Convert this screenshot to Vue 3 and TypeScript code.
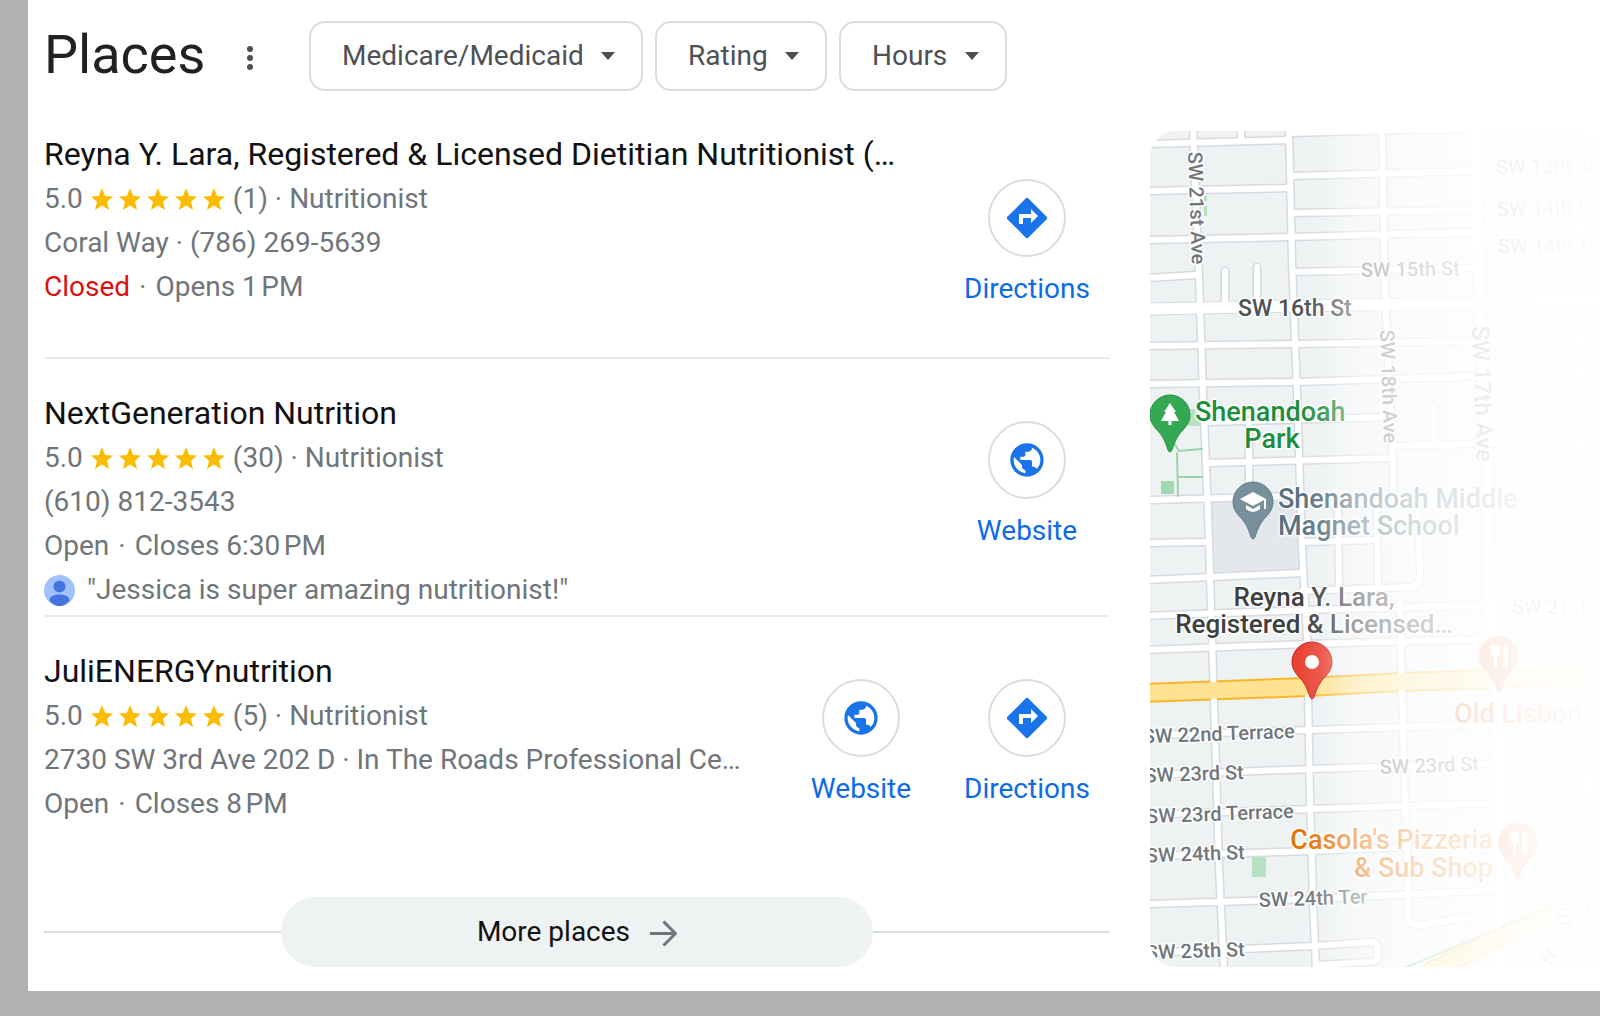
<script setup lang="ts">
type Action = 'website' | 'directions'

interface Place {
  name: string
  reviews: number
  address: string
  status: string
  closed?: boolean
  hours: string
  quote?: string
  actions: Action[]
  lowActions?: boolean
}

interface Label {
  text: string
  x: number
  y: number
  size: number
  fill: string
  rotate?: number
  anchor?: 'start' | 'middle' | 'end'
}

const filters: string[] = ['Medicare/Medicaid', 'Rating', 'Hours']

const places: Place[] = [
  {
    name: 'Reyna Y. Lara, Registered & Licensed Dietitian Nutritionist (…',
    reviews: 1,
    address: 'Coral Way · (786) 269-5639',
    status: 'Closed',
    closed: true,
    hours: 'Opens 1\u202fPM',
    actions: ['directions'],
    lowActions: true,
  },
  {
    name: 'NextGeneration Nutrition',
    reviews: 30,
    address: '(610) 812-3543',
    status: 'Open',
    hours: 'Closes 6:30\u202fPM',
    quote: '"Jessica is super amazing nutritionist!"',
    actions: ['website'],
  },
  {
    name: 'JuliENERGYnutrition',
    reviews: 5,
    address: '2730 SW 3rd Ave 202 D · In The Roads Professional Ce…',
    status: 'Open',
    hours: 'Closes 8\u202fPM',
    actions: ['website', 'directions'],
  },
]

const actionLabels: Record<Action, string> = { website: 'Website', directions: 'Directions' }

const avenues: string[] = [
  'M43-4L49 146L53 262L58 382L62 506L65 602L69 736L74 840',
  'M139-4L142 129L147 262L152 416L157 506L160 669L163 769L166 840',
  'M232-4L235 162L243 332V360M250 472L253 602L258 762V784Q260 796 270 794L320 786',
  'M91-4V10M99 292V366M188 378L189 456M227 378L228 456M284 275V313',
  'M75 140V176M107 136V176',
  'M426-4L430 300L440 840',
]

const wideAvenue = 'M326-4L328 129L338 349L340 466L348 602L352 840'

const streets: string[] = [
  'M-4 13L138 9M140 2L326-3',
  'M-4 60L140 57M141 45L326 40M141 82L326 79',
  'M-4 109L141 106L326 101L454 98',
  'M-4 147L47 144M143 141L328 137',
  'M-4 215L145 213L330 210L454 208',
  'M-4 253L146 251L332 245L454 243',
  'M56 291L243 286M58 332L243 327M243 315L454 310',
  'M-4 369L150 365M150 374L268 370M-4 412L57 411M153 411L226 409',
  'M-4 449L152 442M152 460L260 456Q271 455 270 440L268 372',
  'M-4 485L157 479L338 474M-4 519L157 513L340 508',
  'M-4 604L161 599L346 593M-4 644L161 638L348 632',
  'M-4 684L161 678L350 672M-4 725L163 720L258 716',
  'M-4 773L163 768L352 759M352 654L454 651',
  'M-4 822L165 815L220 811Q228 811 228 819V823Q228 831 220 831L168 834',
]

const mainStreet = 'M-4 178L144 175L328 172L454 170'
const coralWay = 'M-4 562L157 556L252 551L454 544'
const highway = 'M281 840L352 806L407 782L454 757'

const gray = '#70767b'
const green = '#1e8e3e'
const slate = '#587282'
const ink = '#3f3f3f'
const orange = '#e37400'

const labels: Label[] = [
  { text: 'SW 21st Ave', x: 38, y: 21, size: 20, fill: gray, rotate: 88 },
  { text: 'SW 13th St', x: 346, y: 43, size: 20, fill: gray, rotate: -1 },
  { text: 'SW 14th St', x: 347, y: 85, size: 20, fill: gray, rotate: -1 },
  { text: 'SW 14th Ter', x: 348, y: 122, size: 20, fill: gray, rotate: -1 },
  { text: 'SW 15th St', x: 211, y: 146, size: 20, fill: gray, rotate: -1 },
  { text: 'SW 16th St', x: 88, y: 185, size: 23, fill: '#4d5256' },
  { text: 'SW 18th Ave', x: 230, y: 199, size: 20, fill: gray, rotate: 88 },
  { text: 'SW 17th Ave', x: 322, y: 195, size: 24, fill: gray, rotate: 88 },
  { text: 'Shenandoah', x: 45, y: 290, size: 27, fill: green },
  { text: 'Park', x: 122, y: 317, size: 27, fill: green, anchor: 'middle' },
  { text: 'Shenandoah Middle', x: 128, y: 377, size: 27, fill: slate },
  { text: 'Magnet School', x: 128, y: 404, size: 27, fill: slate },
  { text: 'Reyna Y. Lara,', x: 164, y: 475, size: 26, fill: ink, anchor: 'middle' },
  { text: 'Registered & Licensed…', x: 164, y: 502, size: 26, fill: ink, anchor: 'middle' },
  { text: 'SW 21st St', x: 362, y: 483, size: 20, fill: gray },
  { text: 'Old Lisbon R', x: 304, y: 592, size: 27, fill: '#e0581c' },
  { text: 'SW 22nd Terrace', x: 145, y: 607, size: 20, fill: gray, rotate: -2, anchor: 'end' },
  { text: 'SW 23rd St', x: 94, y: 648, size: 20, fill: gray, rotate: -2, anchor: 'end' },
  { text: 'SW 23rd St', x: 230, y: 643, size: 20, fill: gray, rotate: -2 },
  { text: 'SW 23rd Terrace', x: 144, y: 687, size: 20, fill: gray, rotate: -2, anchor: 'end' },
  { text: 'SW 24th St', x: 95, y: 728, size: 20, fill: gray, rotate: -2, anchor: 'end' },
  { text: "Casola's Pizzeria", x: 343, y: 718, size: 27, fill: orange, anchor: 'end' },
  { text: '& Sub Shop', x: 343, y: 746, size: 27, fill: orange, anchor: 'end' },
  { text: 'SW 24th Ter', x: 109, y: 776, size: 20, fill: gray, rotate: -2 },
  { text: 'SW 25th St', x: 95, y: 825, size: 20, fill: gray, rotate: -2, anchor: 'end' },
  { text: 'S Dixie', x: 412, y: 796, size: 24, fill: gray, rotate: -27 },
  { text: 'H', x: 400, y: 836, size: 20, fill: gray, rotate: -50 },
]

const pinShape =
  'M0-20C11-20 20-11 20 0C20 7 16 12 11 17C6 23 4 29 2 35Q0 39-2 35C-4 29-6 23-11 17C-16 12-20 7-20 0C-20-11-11-20 0-20Z'
</script>

<template>
  <main class="page">
    <section class="listing">
      <header class="head">
        <h1>Places</h1>
        <button class="more" type="button" aria-label="More options">
          <svg width="8" height="26" viewBox="0 0 8 26" aria-hidden="true">
            <circle cx="4" cy="4" r="3" /><circle cx="4" cy="13" r="3" /><circle cx="4" cy="22" r="3" />
          </svg>
        </button>
        <div class="filters">
          <div v-for="filter in filters" :key="filter" class="chip">
            <select :aria-label="filter">
              <option>{{ filter }}</option>
            </select>
            <svg width="14" height="8" viewBox="0 0 14 8" aria-hidden="true"><path d="M0 0H14L7 8Z" /></svg>
          </div>
        </div>
      </header>

      <article v-for="place in places" :key="place.name" class="place">
        <div class="info">
          <h2>{{ place.name }}</h2>
          <p class="rating">
            <span>5.0</span>
            <svg width="134" height="22" viewBox="0 0 134 22" role="img" aria-label="5 stars">
              <path
                v-for="n in 5"
                :key="n"
                :transform="`translate(${(n - 1) * 28} 0)`"
                d="M11 0L14.2 7.9L22 8.4L16 13.8L18 22L11 17.6L4 22L6 13.8L0 8.4L7.800 7.900Z"
              />
            </svg>
            <span>({{ place.reviews }}) · Nutritionist</span>
          </p>
          <p>{{ place.address }}</p>
          <p class="hours">
            <span :class="{ closed: place.closed }">{{ place.status }}</span>
            <span>·</span>
            <span>{{ place.hours }}</span>
          </p>
          <p v-if="place.quote" class="quote">
            <svg width="31" height="31" viewBox="0 0 31 31" aria-hidden="true">
              <circle cx="15.500" cy="15.500" r="15.500" fill="#a1c2fa" />
              <circle cx="15.500" cy="11.500" r="6" fill="#4374e0" />
              <path d="M5.500 25.500C5.500 21 11 19.500 15.500 19.500S25.500 21 25.500 25.500C23 29 19.500 31 15.500 31S8 29 5.500 25.500Z" fill="#4374e0" />
            </svg>
            <span>{{ place.quote }}</span>
          </p>
        </div>
        <div class="actions" :class="{ low: place.lowActions }">
          <a v-for="action in place.actions" :key="action" href="#" class="action">
            <span class="ring">
              <svg v-if="action === 'website'" width="40" height="40" viewBox="0 0 24 24" aria-hidden="true">
                <path d="M12 2C6.480 2 2 6.480 2 12s4.480 10 10 10 10-4.480 10-10S17.520 2 12 2zM4 12c0-.61.08-1.210.21-1.780L8.990 15v1c0 1.100.9 2 2 2v1.930C7.060 19.430 4 16.070 4 12zm13.890 5.400c-.26-.81-1-1.400-1.900-1.400h-1v-3c0-.55-.45-1-1-1h-6v-2h2c.55 0 1-.45 1-1V7h2c1.100 0 2-.9 2-2v-.41C17.920 5.770 20 8.650 20 12c0 2.080-.81 3.980-2.110 5.400z" />
              </svg>
              <svg v-else width="48" height="48" viewBox="0 0 24 24" aria-hidden="true">
                <path d="M21.710 11.290l-9-9a1 1 0 0 0-1.420 0l-9 9a1 1 0 0 0 0 1.420l9 9a1 1 0 0 0 1.420 0l9-9a1 1 0 0 0 0-1.420zM14 14.500V12h-4v3H8v-5h6V7.500l3.500 3.500z" />
              </svg>
            </span>
            <span>{{ actionLabels[action] }}</span>
          </a>
        </div>
      </article>

      <div class="footer">
        <a href="#" class="all">
          <span>More places</span>
          <svg width="27" height="27" viewBox="0 0 27 27" aria-hidden="true">
            <path d="M0 14.500H25M13.500 2.500L25.500 14.500L13.500 26.500" />
          </svg>
        </a>
      </div>
    </section>

    <svg class="map" viewBox="0 0 450 836" preserveAspectRatio="xMinYMin slice" role="img" aria-label="Map of places">
      <defs>
        <linearGradient id="fade">
          <stop offset="0.33" stop-color="#fff" stop-opacity="0" />
          <stop offset="0.38" stop-color="#fff" stop-opacity="0.12" />
          <stop offset="0.43" stop-color="#fff" stop-opacity="0.4" />
          <stop offset="0.48" stop-color="#fff" stop-opacity="0.58" />
          <stop offset="0.58" stop-color="#fff" stop-opacity="0.74" />
          <stop offset="0.72" stop-color="#fff" stop-opacity="0.86" />
          <stop offset="0.82" stop-color="#fff" stop-opacity="0.93" />
          <stop offset="1" stop-color="#fff" stop-opacity="0.98" />
        </linearGradient>
      </defs>
      <rect width="450" height="836" fill="#eef2f3" />
      <path d="M61 371L151 367V441L62 446Z" fill="#e4e8ec" />
      <g fill="#b7e1c1">
        <rect x="54" y="65" width="3" height="5" />
        <rect x="54" y="75" width="3" height="10" />
        <path d="M38 278H44L52 290V295H38Z" />
        <rect x="11" y="350" width="13" height="13" fill="#a3d9b1" />
        <rect x="102" y="725" width="14" height="21" />
      </g>
      <g fill="none" stroke-linecap="round">
        <g stroke="#d6dae1">
          <path v-for="d in avenues" :key="d" :d="d" stroke-width="9" />
          <path v-for="d in streets" :key="d" :d="d" stroke-width="9" />
          <path :d="wideAvenue" stroke-width="13" />
          <path :d="mainStreet" stroke-width="13" />
        </g>
        <path :d="coralWay" stroke="#f9b529" stroke-width="20" />
        <g stroke="#fff">
          <path v-for="d in avenues" :key="d" :d="d" stroke-width="6" />
          <path v-for="d in streets" :key="d" :d="d" stroke-width="6" />
          <path :d="wideAvenue" stroke-width="11" />
          <path :d="mainStreet" stroke-width="11" />
        </g>
        <path :d="coralWay" stroke="#fde293" stroke-width="16" />
        <path d="M247 840L350 797L454 748" stroke="#81c995" stroke-width="2" />
        <path :d="highway" stroke="#f9b529" stroke-width="19" />
        <path :d="highway" stroke="#fde293" stroke-width="16" />
        <path d="M24 312L29 320L52 318M27 322L28 365M28 346H52" stroke="#9ad5aa" stroke-width="2" />
      </g>

      <g class="labels">
        <text
          v-for="(label, i) in labels"
          :key="i"
          :x="label.x"
          :y="label.y"
          :font-size="label.size"
          :fill="label.fill"
          :text-anchor="label.anchor ?? 'start'"
          :transform="`rotate(${label.rotate ?? 0} ${label.x} ${label.y})`"
        >{{ label.text }}</text>
      </g>

      <g transform="translate(20 284)">
        <path :d="pinShape" fill="#34a853" stroke="#249343" />
        <path d="M0-12L6-3H4L9 6H1.500V10H-1.500V6H-9L-4-3H-6Z" fill="#fff" />
      </g>
      <g transform="translate(103 371)">
        <path :d="pinShape" fill="#78909c" stroke="#607d8b" />
        <path d="M0-10L13-3V7H11V-2L0 4L-13-3ZM-7 3L0 7L7 3V7Q0 13-7 7Z" fill="#fff" />
      </g>
      <g transform="translate(162 531)">
        <path :d="pinShape" fill="#ea4335" stroke="#c5221f" />
        <circle r="7" fill="#fff" />
      </g>
      <g v-for="pin in [[349, 525], [368, 712]]" :key="pin[0]" :transform="`translate(${pin[0]} ${pin[1]})`">
        <path :d="pinShape" fill="#f0703c" />
        <path d="M-8-11V-4Q-8 0-5 0V12H-2V0Q1 0 1-4V-11M4 12V-6Q4-11 9-11V12H6V3Z" fill="#fff" />
      </g>
      <rect width="450" height="836" fill="url(#fade)" />
    </svg>
  </main>
</template>

<style>
body {
  margin: 0;
  background: #b2b2b2;
}
</style>

<style scoped>
.page {
  display: grid;
  grid-template-columns: minmax(0, 1066fr) minmax(0, 450fr);
  column-gap: 40px;
  box-sizing: border-box;
  margin: 0 0 25px 28px;
  padding: 0 0 24px 16px;
  background: #fff;
  color: #70757a;
  font: 28px/44px Roboto, "Liberation Sans", sans-serif;
}

h1,
h2,
p {
  margin: 0;
  font-weight: 400;
}

.head {
  display: flex;
  align-items: center;
  height: 70px;
  padding: 21px 0 8px;
}

.head h1 {
  width: 202px;
  padding-bottom: 2px;
  color: #202124;
  font-size: 54px;
  line-height: 64px;
}

.more {
  display: flex;
  margin-top: 4px;
  padding: 0;
  border: 0;
  background: none;
  fill: #4d5156;
}

.filters {
  display: flex;
  gap: 12px;
  margin-left: 55px;
}

.chip {
  display: grid;
  align-items: center;
  box-sizing: border-box;
  height: 70px;
  border: 2px solid #dadce0;
  border-radius: 16px;
}

.chip > * {
  grid-area: 1 / 1;
}

.chip select {
  height: 100%;
  padding: 0 57px 0 31px;
  border: 0;
  background: none;
  appearance: none;
  color: #4d5156;
  font: inherit;
}

.chip svg {
  justify-self: end;
  margin-right: 26px;
  fill: #4d5156;
  pointer-events: none;
}

.place {
  display: flex;
  justify-content: space-between;
  box-sizing: border-box;
  height: 258px;
  padding-top: 32px;
}

.place + .place {
  padding-top: 31px;
  border-top: 2px solid #ebebeb;
}

.info {
  min-width: 0;
  white-space: nowrap;
}

.info h2 {
  color: #111;
  font-size: 32px;
  line-height: 46px;
}

.rating,
.quote {
  display: flex;
  align-items: center;
}

.rating {
  gap: 8px;
}

.rating svg {
  fill: #fbbc04;
}

.hours {
  display: flex;
  gap: 9px;
}

.closed {
  color: #dc0f0f;
}

.quote {
  gap: 12px;
}

.actions {
  display: flex;
  padding-top: 31px;
}

.actions.low {
  padding-top: 48px;
}

.action {
  display: flex;
  flex-direction: column;
  align-items: center;
  width: 166px;
  gap: 10px;
  color: #0d6be8;
  text-decoration: none;
}

.ring {
  display: flex;
  align-items: center;
  justify-content: center;
  box-sizing: border-box;
  width: 78px;
  height: 78px;
  border: 2px solid #dadce0;
  border-radius: 50%;
  fill: #1a73e8;
}

.footer {
  display: flex;
  align-items: center;
  margin-top: 24px;
}

.footer::before,
.footer::after {
  content: "";
  flex: 1;
  border-top: 2px solid #dadce0;
}

.all {
  display: flex;
  align-items: center;
  justify-content: center;
  gap: 20px;
  width: 592px;
  height: 70px;
  border-radius: 35px;
  background: #eef2f3;
  color: #111;
  text-decoration: none;
}

.all svg {
  fill: none;
  stroke: #70757a;
  stroke-width: 3px;
}

.map {
  display: block;
  width: 100%;
  margin-top: 131px;
  border-radius: 26px 0 0 26px;
}

.labels text {
  font-weight: 500;
  stroke: #fff;
  stroke-width: 3px;
  stroke-linejoin: round;
  paint-order: stroke;
}
</style>
